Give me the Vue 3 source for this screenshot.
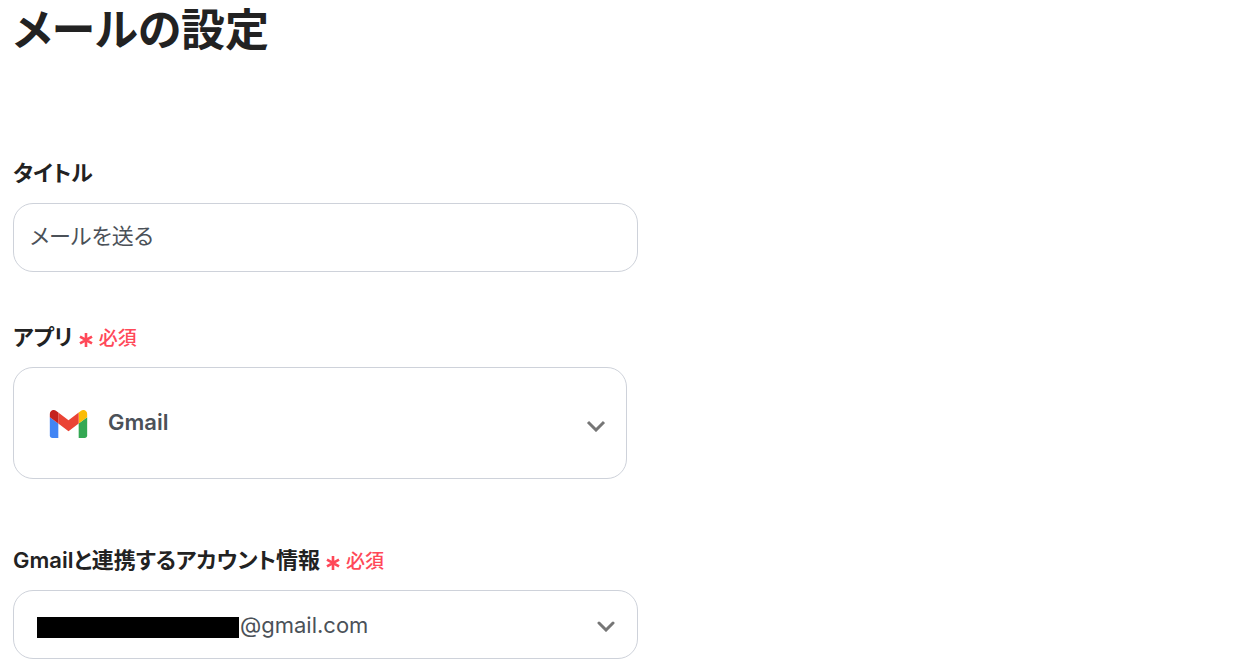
<script setup>
import { ref } from 'vue'

const title = ref('メールを送る')
const app = ref('Gmail')
const account = ref('@gmail.com')
</script>

<template>
  <main class="page">
    <h1 class="heading">メールの設定</h1>
    <form class="form" @submit.prevent>
      <div class="field">
        <label class="label" for="title">タイトル</label>
        <input id="title" v-model="title" class="control title-input" type="text" />
      </div>

      <div class="field app-field">
        <label class="label" for="app">
          アプリ
          <span class="required">
            <svg class="star" viewBox="0 0 14 14" aria-hidden="true">
              <path d="M7 0V14M1 3.6L13 10.4M13 3.6L1 10.4" />
            </svg>
            必須
          </span>
        </label>
        <div class="select-wrap app-wrap">
          <select id="app" v-model="app" class="control app-select">
            <option>Gmail</option>
          </select>
          <svg class="logo" viewBox="52 42 88 66" aria-hidden="true">
            <path fill="#4285f4" d="M58 108h14V74L52 59v43c0 3.32 2.69 6 6 6" />
            <path fill="#34a853" d="M120 108h14c3.32 0 6-2.69 6-6V59l-20 15" />
            <path fill="#fbbc04" d="M120 48v26l20-15v-8c0-7.42-8.47-11.65-14.4-7.2" />
            <path fill="#ea4335" d="M72 74V48l24 18 24-18v26L96 92" />
            <path fill="#c5221f" d="M52 51v8l20 15V48l-5.6-4.2c-5.94-4.45-14.4-.22-14.4 7.2" />
          </svg>
          <svg class="chevron" viewBox="0 0 20 12" aria-hidden="true">
            <path d="M2 2L10 10L18 2" />
          </svg>
        </div>
      </div>

      <div class="field">
        <label class="label" for="account">
          Gmailと連携するアカウント情報
          <span class="required">
            <svg class="star" viewBox="0 0 14 14" aria-hidden="true">
              <path d="M7 0V14M1 3.6L13 10.4M13 3.6L1 10.4" />
            </svg>
            必須
          </span>
        </label>
        <div class="select-wrap">
          <select id="account" v-model="account" class="control account-select">
            <option>@gmail.com</option>
          </select>
          <span class="mask"></span>
          <svg class="chevron round" viewBox="0 0 20 12" aria-hidden="true">
            <path d="M3 3L10 10L17 3" />
          </svg>
        </div>
      </div>
    </form>
  </main>
</template>

<style>
body {
  margin: 0;
  background: #fff;
}
</style>

<style scoped>
.page {
  padding: 0 13px 7px;
  color: #222;
  font-family: Inter, "Noto Sans CJK JP", sans-serif;
  font-feature-settings: "palt";
}

.heading {
  margin: 0;
  font-size: 44px;
  font-weight: 600;
  line-height: 60px;
}

.form {
  display: flex;
  flex-direction: column;
  gap: 48px;
  max-width: 625px;
  margin-top: 96px;
}

.field {
  display: flex;
  flex-direction: column;
  gap: 12px;
}

.app-field {
  margin-bottom: 16px;
}

.label {
  display: flex;
  align-items: center;
  gap: 6px;
  font-size: 22px;
  font-weight: 600;
  line-height: 35px;
}

.required {
  display: flex;
  align-items: center;
  gap: 6px;
  padding-top: 3px;
  color: #ff4858;
  font-size: 19px;
  font-weight: 500;
  line-height: 32px;
}

.star {
  width: 14px;
  height: 14px;
  margin-top: 2px;
  fill: none;
  stroke: currentColor;
  stroke-width: 2.6;
}

.control {
  box-sizing: border-box;
  width: 100%;
  height: 69px;
  padding: 0 16px;
  border: 1px solid #ced2da;
  border-radius: 20px;
  background: #fff;
  color: #4b5158;
  font: inherit;
  font-size: 22px;
  font-feature-settings: inherit;
  appearance: none;
}

.title-input {
  padding-bottom: 8px;
}

.select-wrap {
  display: grid;
  position: relative;
}

.app-wrap {
  margin-right: 11px;
}

.app-select {
  height: 112px;
  padding: 0 48px 2px 94px;
  font-weight: 600;
}

.logo {
  position: absolute;
  top: 43px;
  left: 36px;
  width: 39px;
  height: 28px;
}

.account-select {
  padding-left: 226px;
}

.mask {
  position: absolute;
  top: 27px;
  left: 24px;
  width: 202px;
  height: 21px;
  background: #000;
  pointer-events: none;
}

.chevron {
  position: absolute;
  top: 53px;
  right: 21px;
  width: 20px;
  height: 12px;
  fill: none;
  stroke: #767676;
  stroke-width: 3;
  pointer-events: none;
}

.round {
  top: 30px;
  right: 22px;
  stroke-linecap: round;
}
</style>
